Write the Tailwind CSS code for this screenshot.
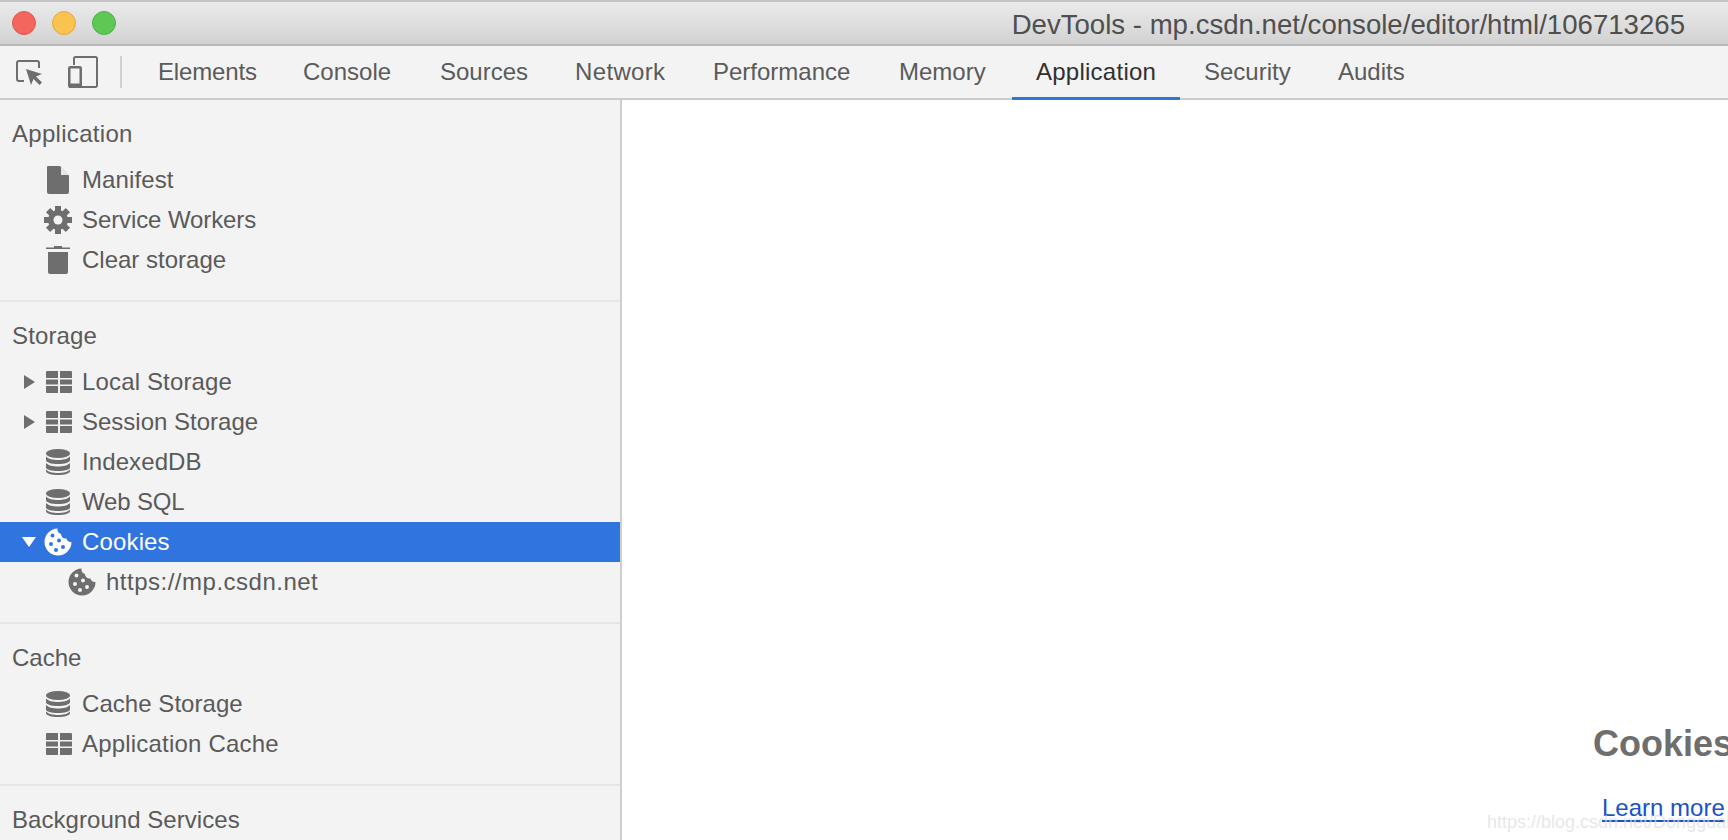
<!DOCTYPE html>
<html lang="en">
<head>
    <meta charset="UTF-8">
    <title>DevTools - mp.csdn.net/console/editor/html/106713265</title>
    <script src="https://cdn.jsdelivr.net/npm/@tailwindcss/browser@4"></script>
</head>
<body class="w-[1728px] h-[840px] overflow-hidden bg-white text-[24px] text-[#5a5a5a] font-['Liberation_Sans',Arial,sans-serif]">

    <!-- Shared icons -->
    <svg class="hidden">
        <symbol id="icon-grid" viewBox="0 0 26 22">
            <path fill="currentColor" d="M1 0h11v7H0V1a1 1 0 0 1 1-1zM14 0h11a1 1 0 0 1 1 1v6H14zM0 8.500h12v5H0zM14 8.500h12v5H14zM0 15h12v7H1a1 1 0 0 1-1-1zM14 15h12v6a1 1 0 0 1-1 1H14z"/>
        </symbol>
        <symbol id="icon-db" viewBox="0 0 24 26">
            <ellipse cx="12" cy="4.500" rx="12" ry="4.500" fill="currentColor"/>
            <path fill="currentColor" d="M0 7.500C2 10 7 11 12 11s10-1 12-3.500V11c0 2.500-5.500 4-12 4S0 13.500 0 11zM0 14c2 2.500 7 3.500 12 3.500s10-1 12-3.500v4.500c0 2-5.500 3.500-12 3.500S0 20.500 0 18.500zM0 20.500c2 2.500 7 3.500 12 3.500s10-1 12-3.500V22c0 2.500-5.500 4-12 4S0 24.500 0 22z"/>
        </symbol>
        <symbol id="icon-cookie" viewBox="0 0 28 28">
            <path fill="currentColor" fill-rule="evenodd" d="M13.500.5A13.500 13.500 0 1 0 27.500 14c-2.500.5-4.500-1-5-3.500-3 .5-5.500-1.500-5.500-4.500C14.500 5.500 13 3 13.500.5zM8.500 5.500a2 2 0 1 0 0 4 2 2 0 0 0 0-4zM15 10.500a2 2 0 1 0 0 4 2 2 0 0 0 0-4zM7 14a2 2 0 1 0 0 4 2 2 0 0 0 0-4zM19 17a2 2 0 1 0 0 4 2 2 0 0 0 0-4zM12 20a2 2 0 1 0 0 4 2 2 0 0 0 0-4z"/>
        </symbol>
    </svg>

    <!-- Title bar -->
    <div class="h-[46px] flex items-center justify-between pl-3 pr-[43px] border-t-2 border-b-2 border-t-[#c4c4c4] border-b-[#b8b8b8] bg-linear-to-b from-[#ebebeb] to-[#d2d2d2]">
        <div class="flex gap-4">
            <span class="w-6 h-6 rounded-full bg-[#f2665d] border border-[#dd5a52]"></span>
            <span class="w-6 h-6 rounded-full bg-[#fac24f] border border-[#e2aa42]"></span>
            <span class="w-6 h-6 rounded-full bg-[#5fc855] border border-[#50b047]"></span>
        </div>
        <div class="pt-[3px] text-[27.600px] text-[#4f4f4f]">DevTools - mp.csdn.net/console/editor/html/106713265</div>
    </div>

    <!-- Toolbar with tabs -->
    <div class="h-[54px] flex bg-[#f3f3f3] border-b-2 border-[#cbcbcb]">
        <div class="w-[134px] shrink-0 flex items-center">
            <svg class="ml-4 w-[26px] h-[26px] text-[#6e6e6e]" viewBox="0 0 26 26">
                <path fill="none" stroke="currentColor" stroke-width="2" d="M8 22H3a2 2 0 0 1-2-2V4a2 2 0 0 1 2-2h18a2 2 0 0 1 2 2v5"/>
                <path fill="currentColor" d="M10 10l16 5-6 2.500 6 6-2.500 2.500-6-6-2.500 6z"/>
            </svg>
            <svg class="ml-[26px] w-[30px] h-[32px] text-[#6e6e6e]" viewBox="0 0 30 32">
                <path fill="none" stroke="currentColor" stroke-width="2" d="M6 9V2.500A1.500 1.500 0 0 1 7.500 1h20A1.500 1.500 0 0 1 29 2.500v27a1.500 1.500 0 0 1-1.500 1.500H14"/>
                <rect x="1.250" y="11.250" width="11.500" height="19.500" rx="1" fill="none" stroke="currentColor" stroke-width="2.500"/>
                <rect x="1" y="27.500" width="13" height="4.500" fill="currentColor"/>
            </svg>
            <div class="ml-[22px] w-[2px] h-8 bg-[#d0d0d0]"></div>
        </div>
        <div class="w-[145px] pl-6 flex items-center tracking-[-0.15px]">Elements</div>
        <div class="w-[137px] pl-6 flex items-center">Console</div>
        <div class="w-[135px] pl-6 flex items-center">Sources</div>
        <div class="w-[138px] pl-6 flex items-center tracking-[0.35px]">Network</div>
        <div class="w-[186px] pl-6 flex items-center">Performance</div>
        <div class="w-[137px] pl-6 flex items-center">Memory</div>
        <div class="w-[168px] pl-6 flex items-center text-[#303030] tracking-[0.25px] border-b-[3px] border-[#3074e0] -mb-[2px] pt-[1px]">Application</div>
        <div class="w-[134px] pl-6 flex items-center">Security</div>
        <div class="w-[120px] pl-6 flex items-center">Audits</div>
    </div>

    <div class="h-[740px] flex">
        <!-- Sidebar -->
        <div class="w-[622px] shrink-0 bg-[#f3f3f3] border-r-2 border-[#cfcfcf] overflow-hidden">
            <div class="pt-[14px] pb-[20px] border-b-2 border-[#e6e6e6]">
                <div class="h-10 mb-[6px] pl-3 flex items-center tracking-[0.3px]">Application</div>
                <div class="h-10 pl-[44px] flex items-center">
                    <svg class="w-7 h-7 text-[#6e6e6e]" viewBox="0 0 28 28">
                        <path fill="currentColor" d="M5 0h12l9 9.500V26a2 2 0 0 1-2 2H6a2 2 0 0 1-2-2V1a1 1 0 0 1 1-1z" transform="translate(-1)"/>
                        <path fill="#e6e6e6" d="M17 0.500l8 8.500h-8z"/>
                    </svg>
                    <span class="ml-[10px] tracking-[0.1px]">Manifest</span>
                </div>
                <div class="h-10 pl-[44px] flex items-center">
                    <svg class="w-7 h-7 text-[#6e6e6e]" viewBox="0 0 28 28">
                        <circle cx="14" cy="14" r="7.500" fill="none" stroke="currentColor" stroke-width="5"/>
                        <g fill="currentColor">
                            <rect x="11" y="0" width="6" height="28"/>
                            <rect x="11" y="0" width="6" height="28" transform="rotate(45 14 14)"/>
                            <rect x="11" y="0" width="6" height="28" transform="rotate(90 14 14)"/>
                            <rect x="11" y="0" width="6" height="28" transform="rotate(135 14 14)"/>
                        </g>
                        <circle cx="14" cy="14" r="4.500" fill="#f3f3f3"/>
                    </svg>
                    <span class="ml-[10px] tracking-[-0.1px]">Service Workers</span>
                </div>
                <div class="h-10 pl-[44px] flex items-center">
                    <svg class="w-7 h-7 text-[#6e6e6e]" viewBox="0 0 28 28">
                        <path fill="currentColor" d="M2 1.500h8V0h8v1.500h8V3H2zM4 6h20v20a2 2 0 0 1-2 2H6a2 2 0 0 1-2-2z"/>
                    </svg>
                    <span class="ml-[10px]">Clear storage</span>
                </div>
            </div>

            <div class="pt-[14px] pb-[20px] border-b-2 border-[#e6e6e6]">
                <div class="h-10 mb-[6px] pl-3 flex items-center tracking-[0.15px]">Storage</div>
                <div class="h-10 pl-6 flex items-center">
                    <svg class="w-[11px] h-[14px] text-[#6e6e6e]" viewBox="0 0 11 14"><path fill="currentColor" d="M0 0l11 7-11 7z"/></svg>
                    <svg class="ml-[11px] w-[26px] h-[22px] text-[#6e6e6e]"><use href="#icon-grid"/></svg>
                    <span class="ml-[10px] tracking-[0.15px]">Local Storage</span>
                </div>
                <div class="h-10 pl-6 flex items-center">
                    <svg class="w-[11px] h-[14px] text-[#6e6e6e]" viewBox="0 0 11 14"><path fill="currentColor" d="M0 0l11 7-11 7z"/></svg>
                    <svg class="ml-[11px] w-[26px] h-[22px] text-[#6e6e6e]"><use href="#icon-grid"/></svg>
                    <span class="ml-[10px]">Session Storage</span>
                </div>
                <div class="h-10 pl-[46px] flex items-center">
                    <svg class="w-6 h-[26px] text-[#6e6e6e]"><use href="#icon-db"/></svg>
                    <span class="ml-3 tracking-[0.1px]">IndexedDB</span>
                </div>
                <div class="h-10 pl-[46px] flex items-center">
                    <svg class="w-6 h-[26px] text-[#6e6e6e]"><use href="#icon-db"/></svg>
                    <span class="ml-3 tracking-[-0.15px]">Web SQL</span>
                </div>
                <div class="h-10 pl-[22px] flex items-center bg-[#3074e0] text-white">
                    <svg class="w-[14px] h-[10px]" viewBox="0 0 14 10"><path fill="currentColor" d="M0 0h14l-7 10z"/></svg>
                    <svg class="ml-2 w-7 h-7"><use href="#icon-cookie"/></svg>
                    <span class="ml-[10px] tracking-[0.15px]">Cookies</span>
                </div>
                <div class="h-10 pl-[68px] flex items-center">
                    <svg class="w-7 h-7 text-[#6e6e6e]"><use href="#icon-cookie"/></svg>
                    <span class="ml-[10px] tracking-[0.5px]">https://mp.csdn.net</span>
                </div>
            </div>

            <div class="pt-[14px] pb-[20px] border-b-2 border-[#e6e6e6]">
                <div class="h-10 mb-[6px] pl-3 flex items-center">Cache</div>
                <div class="h-10 pl-[46px] flex items-center">
                    <svg class="w-6 h-[26px] text-[#6e6e6e]"><use href="#icon-db"/></svg>
                    <span class="ml-3 tracking-[0.05px]">Cache Storage</span>
                </div>
                <div class="h-10 pl-[46px] flex items-center">
                    <svg class="w-[26px] h-[22px] text-[#6e6e6e]"><use href="#icon-grid"/></svg>
                    <span class="ml-[10px] tracking-[0.2px]">Application Cache</span>
                </div>
            </div>

            <div class="pt-[14px]">
                <div class="h-10 pl-3 flex items-center tracking-[0.05px]">Background Services</div>
            </div>
        </div>

        <!-- Empty state pane, wider than the window so it runs off the edge -->
        <div class="relative flex-1 overflow-hidden bg-white">
            <div class="pt-[622px] pl-[971px] w-[1200px]">
                <div class="text-[36px] leading-[44px] font-bold text-[#6e6e6e]">Cookies</div>
                <a class="block mt-[28px] ml-[9px] leading-[28px] underline underline-offset-[4px] text-[#1a53c8]">Learn more</a>
            </div>
            <div class="absolute left-[865px] top-[710px] text-[18px] leading-[24px] text-[#dcdcdc]/70 whitespace-nowrap">https://blog.csdn.net/Dongguabai</div>
        </div>
    </div>
</body>
</html>
